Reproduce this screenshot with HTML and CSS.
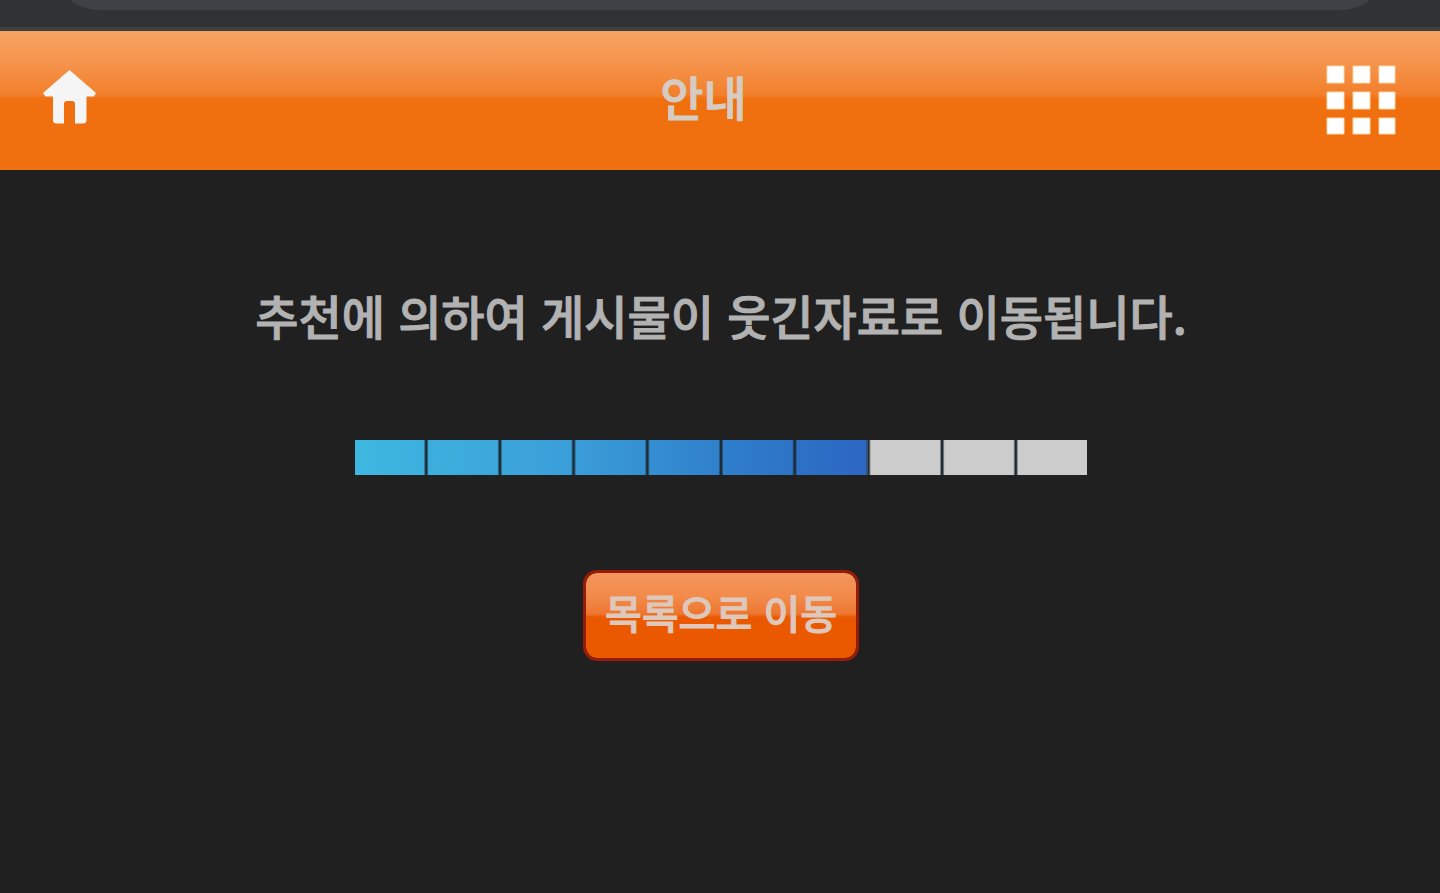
FILE: index.html
```html
<!DOCTYPE html>
<html lang="ko">
<head>
<meta charset="utf-8">
<meta name="viewport" content="width=device-width, initial-scale=1">
<title>안내</title>
<link rel="stylesheet" href="styles.css">
</head>
<body>
<div class="browser-bar"><div class="address-field"></div></div>
<header class="app-header">
  <a class="icon-link" href="#" aria-label="홈">
    <svg width="54" height="56" viewBox="0 0 54 56" aria-hidden="true"><path fill="#f5f5f5" d="M26.500 1 53 24 51 27.500H43.500V51Q43.500 54.500 40 54.500H32V35Q32 32 29 32H24Q21 32 21 35V54.500H13.500Q10 54.500 10 51V27.500H2.500L0 24Z"/></svg>
  </a>
  <h1 class="title">안내</h1>
  <button class="icon-button" type="button" aria-label="메뉴">
    <svg width="70" height="70" viewBox="0 0 70 70" aria-hidden="true"><path fill="#fff" stroke="#fbd7a8" d="M1 1h17v17H1zM27 1h17v17H27zM53 1h16v17H53zM1 27h17v17H1zM27 27h17v17H27zM53 27h16v17H53zM1 53h17v16H1zM27 53h17v16H27zM53 53h16v16H53z"/></svg>
  </button>
</header>
<main class="notice">
  <p class="message">추천에 의하여 게시물이 웃긴자료로 이동됩니다.</p>
  <div class="progress" role="progressbar" aria-label="이동" aria-valuemin="0" aria-valuemax="10" aria-valuenow="7"><div class="progress-fill" style="width:70%"></div></div>
  <button class="list-button" type="button">목록으로 이동</button>
</main>
</body>
</html>
```
FILE: styles.css
```css
* { box-sizing: border-box; }
body {
  margin: 0;
  min-height: 100vh;
  background: #202020;
  color: #b2b2b2;
  font-family: "Noto Sans CJK KR", sans-serif;
  font-weight: 500;
  -webkit-text-stroke: 1px currentColor;
}
.browser-bar {
  display: flex;
  flex-direction: column;
  justify-content: flex-end;
  height: 31px;
  padding: 0 50px 17px;
  overflow: hidden;
  background: #313236;
  border-bottom: 4px solid #40403f;
}
.address-field {
  flex: 0 0 100px;
  background: #404146;
  border-radius: 50px;
}
.app-header {
  display: flex;
  align-items: center;
  justify-content: space-between;
  height: 139px;
  padding: 0 44px 2px 43px;
  background: linear-gradient(#f7a263 0, #f5944c 23%, #f27f2b 46%, #f06f0e 49%, #f06f0e 100%);
}
.icon-link, .icon-button { display: flex; }
.icon-link { padding-bottom: 6px; }
.icon-button {
  padding: 0;
  border: 0;
  background: none;
}
.title {
  margin: 0;
  padding: 0 16px 8px 0;
  color: #d5ccc3;
  font-size: 47px;
  line-height: 64px;
  font-weight: 500;
}
.notice {
  display: flex;
  flex-direction: column;
  align-items: center;
  padding: 109px 24px 112px 26px;
}
.message {
  margin: 0 0 89px;
  font-size: 47px;
  line-height: 72px;
  text-align: center;
}
.progress {
  position: relative;
  width: 732px;
  max-width: 100%;
  height: 35px;
  background: #ccc;
}
.progress-fill {
  height: 100%;
  background: linear-gradient(90deg, #3eb8e1, #3a9dd8 43%, #2e7cca 75%, #2c66c2);
}
.progress::after {
  --step: calc((100% + 5px) / 10);
  content: "";
  position: absolute;
  inset: 0;
  background: repeating-linear-gradient(90deg, #1d2b3500 0, #1d2b3500 calc(var(--step) - 5px), #1d2b35 calc(var(--step) - 3px), #1d2b35 calc(var(--step) - 2px), #1d2b3500 var(--step));
}
.list-button {
  margin-top: 95px;
  padding: 10px 19px 17px;
  border: 3px solid #951c08;
  border-radius: 14px;
  background: linear-gradient(#f4965d 0, #f28a4a 28%, #ee7630 48%, #ea5800 52%, #ea5800 100%) padding-box;
  color: #dec8bb;
  font: 500 40px/58px "Noto Sans CJK KR", sans-serif;
}
```
